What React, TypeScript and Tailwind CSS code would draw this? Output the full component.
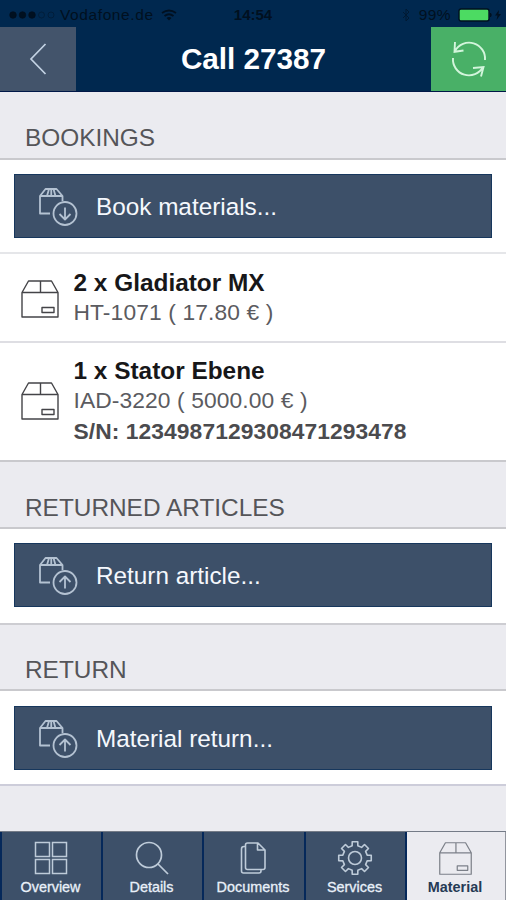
import type { ReactNode } from "react";

function BoxIcon({ className }: { className: string }) {
  return (
    <svg viewBox="0 0 40 40" className={className} fill="none" stroke="currentColor" strokeWidth="1.4" strokeLinejoin="round">
      <path d="M2 13.500 8.500 2H31.500L38 13.500V38H2Z M2 13.500H38 M20.500 2V13.500 M22 28.500H34V33.500H22Z" />
    </svg>
  );
}

function TransferIcon({ up }: { up?: boolean }) {
  return (
    <svg viewBox="0 0 40 40" className="h-10 w-10 text-[#b4c2d2]" fill="none" stroke="currentColor" strokeWidth="1.8" strokeLinejoin="round">
      <path d="M12 27.500H2V10L7.500 3H18.500L24.500 10V15 M2 10H24.500 M11 3 9 10 M15.500 3 17.500 10 M13.250 3V9" />
      <circle cx="27" cy="27.500" r="11.500" />
      {up ? <path d="M27 33.500V22 M21.500 27 27 21.500 32.500 27" /> : <path d="M27 21.500V33 M21.500 28 27 33.500 32.500 28" />}
    </svg>
  );
}

function ActionRow({ label, up, className }: { label: string; up?: boolean; className: string }) {
  return (
    <div className={`bg-white px-[14px] ${className}`}>
      <button className="flex h-16 w-[478px] items-center border border-[#17375d] bg-[#3d5069] pl-[23px] text-left text-[24.3px] whitespace-nowrap text-[#f5f8fd]">
        <TransferIcon up={up} />
        <span className="ml-[18px] pt-[2px]">{label}</span>
      </button>
    </div>
  );
}

function SectionTitle({ children, className }: { children: ReactNode; className: string }) {
  return (
    <h2 className={`flex items-end border-b-2 border-[#c9c9cd] bg-[#ebebf0] pl-[25px] text-[24.4px] leading-[28px] text-[#555559] ${className}`}>
      {children}
    </h2>
  );
}

function Tab({ label, active, children }: { label: string; active?: boolean; children: ReactNode }) {
  return (
    <div
      className={`flex flex-col items-center border-l-2 border-[#05285a] pt-[7px] pr-[2px] text-[14.4px] leading-[18px] ${
        active ? "border-r border-r-[#92959e] bg-[#ebebf0] font-bold text-[#263a55]" : "bg-[#3d5069] text-[#e9f0f9]"
      }`}
    >
      <div className="flex h-[39px] items-center justify-center pb-px">{children}</div>
      <span className={active ? "" : "[-webkit-text-stroke:0.3px_currentColor]"}>{label}</span>
    </div>
  );
}

const gearPath = Array.from({ length: 8 }, (_, i) => {
  const base = (i * Math.PI) / 4;
  return [[-0.23, 12.5], [-0.17, 16.5], [0.17, 16.5], [0.23, 12.5]]
    .map(([angle, radius], j) => {
      const x = 18 + Math.sin(base + angle) * radius;
      const y = 18 - Math.cos(base + angle) * radius;
      return `${i === 0 && j === 0 ? "M" : "L"}${x.toFixed(2)} ${y.toFixed(2)}`;
    })
    .join(" ");
}).join(" ") + "Z";

export default function App() {
  return (
    <div className="flex h-[900px] w-[506px] flex-col overflow-hidden bg-[#ebebf0] font-['Liberation_Sans',Arial,sans-serif]">
      <header className="flex h-[92px] flex-col border-b border-[#001747] bg-[#00284f]">
        <div className="grid h-[27px] grid-cols-[1fr_auto_1fr] items-center pt-[3px] text-[15.5px] text-[#001020]">
          <div className="flex items-center pl-[9px]">
            <svg viewBox="0 0 46 8" className="h-2 w-[46px]" stroke="currentColor" strokeWidth="0.7">
              <circle cx="4" cy="4" r="3.3" fill="currentColor" />
              <circle cx="13.500" cy="4" r="3.3" fill="currentColor" />
              <circle cx="23" cy="4" r="3.3" fill="currentColor" />
              <circle cx="32.500" cy="4" r="3" fill="none" opacity=".6" />
              <circle cx="42" cy="4" r="3" fill="none" opacity=".6" />
            </svg>
            <span className="ml-[5px] tracking-[0.6px]">Vodafone.de</span>
            <svg viewBox="0 0 16 12" className="ml-[7px] h-3 w-4" fill="none" stroke="currentColor" strokeWidth="1.8">
              <path d="M1 4Q8-1 15 4 M3.500 7Q8 3.500 12.500 7" />
              <path d="M5.500 9 8 11.500 10.500 9Q8 7 5.500 9Z" fill="currentColor" stroke="none" />
            </svg>
          </div>
          <span className="text-[15px] font-bold">14:54</span>
          <div className="flex items-center justify-end pr-[5px]">
            <svg viewBox="0 0 8 14" className="mr-[9px] h-[14px] w-2 opacity-60" fill="none" stroke="currentColor" strokeWidth="1">
              <path d="M1 4 7 10 4 13V1L7 4 1 10" />
            </svg>
            <span className="mr-[7px] tracking-[0.4px]">99%</span>
            <svg viewBox="0 0 44 14" className="-mr-px h-[14px] w-11">
              <rect x="1" y="1" width="30" height="12" rx="2" fill="#4cdb62" stroke="#001020" strokeWidth="1.4" />
              <path d="M32.500 5Q34 7 32.500 9Z" fill="#001020" stroke="#001020" />
              <path d="M41 2 37 7.500H39.500L38.500 12 43 6H40.500Z" fill="#001020" />
            </svg>
          </div>
        </div>
        <div className="grid h-[65px] grid-cols-[76px_1fr_75px]">
          <button className="flex items-center justify-center bg-[#43546b]">
            <svg viewBox="0 0 18 32" className="h-8 w-[18px]" fill="none" stroke="#c3d2e3" strokeWidth="1.7">
              <path d="M16.500 1 2 16 16.500 31" />
            </svg>
          </button>
          <h1 className="flex items-center justify-center pt-px text-[29.7px] font-bold whitespace-nowrap text-white">Call 27387</h1>
          <button className="flex items-center justify-center bg-[#49b067]">
            <svg viewBox="0 0 38 40" className="h-10 w-[38px]" fill="none" stroke="#d3f5dc" strokeWidth="1.9">
              <path d="M5 12A16 16 0 0 1 35 21 M33 28A16 16 0 0 1 3 19 M5 3 4.500 12.800 13.500 11.500 M23 29 33.500 28 31 37.500" />
            </svg>
          </button>
        </div>
      </header>

      <main className="flex-1">
        <SectionTitle className="h-[68px] pb-[6px]">BOOKINGS</SectionTitle>
        <ActionRow label="Book materials..." className="h-[94px] border-b-2 border-[#e5e6e9] pt-[14px]" />
        <article className="flex h-[89px] items-center border-b-2 border-[#dedee3] bg-white pl-5">
          <BoxIcon className="mt-[2px] h-10 w-10 text-[#444448]" />
          <div className="ml-[13.5px] whitespace-nowrap">
            <h3 className="text-[24.4px] leading-[30px] font-bold text-[#171719]">2 x Gladiator MX</h3>
            <p className="-mt-px mb-px text-[22.8px] leading-[30px] tracking-[0.12px] text-[#5b5b60]">HT-1071 ( 17.80 € )</p>
          </div>
        </article>
        <article className="flex h-[119px] items-center border-b-2 border-[#c9c9cd] bg-white pl-5">
          <BoxIcon className="-mt-[2px] h-10 w-10 text-[#444448]" />
          <div className="ml-[13.5px] whitespace-nowrap">
            <h3 className="text-[24.4px] leading-[30px] font-bold text-[#171719]">1 x Stator Ebene</h3>
            <p className="-mt-px text-[22.8px] leading-[30px] tracking-[0.1px] text-[#5b5b60]">IAD-3220 ( 5000.00 € )</p>
            <p className="mb-px text-[22.8px] leading-[32px] font-bold tracking-[0.08px] text-[#4b4b4e]">S/N: 1234987129308471293478</p>
          </div>
        </article>
        <SectionTitle className="h-[67px] pb-[5px]">RETURNED ARTICLES</SectionTitle>
        <ActionRow label="Return article..." up className="h-[96px] border-b-2 border-[#cdcdd2] pt-[14px]" />
        <SectionTitle className="h-[66px] pb-[5px]">RETURN</SectionTitle>
        <ActionRow label="Material return..." up className="h-[95px] border-b-2 border-[#cdcdda] pt-[15px]" />
      </main>

      <nav className="grid h-[69px] grid-cols-[101px_101px_102px_101px_101px] border-t border-[#747b87]">
        <Tab label="Overview">
          <svg viewBox="0 0 34 34" className="h-[34px] w-[34px]" fill="none" stroke="#becbd9" strokeWidth="1.5">
            <path d="M1.500 1.500H15.500V15.500H1.500Z M18.500 1.500H32.500V15.500H18.500Z M1.500 18.500H15.500V32.500H1.500Z M18.500 18.500H32.500V32.500H18.500Z" />
          </svg>
        </Tab>
        <Tab label="Details">
          <svg viewBox="0 0 34 34" className="h-[34px] w-[34px]" fill="none" stroke="#becbd9" strokeWidth="1.7">
            <circle cx="14" cy="14" r="12.5" />
            <path d="M23 23 33 33" />
          </svg>
        </Tab>
        <Tab label="Documents">
          <svg viewBox="0 0 28 34" className="h-[34px] w-7" fill="none" stroke="#becbd9" strokeWidth="1.6" strokeLinejoin="round">
            <path d="M8.500 2H19L26 9V26.500Q26 28.500 24 28.500H8.500Q6.500 28.500 6.500 26.500V4Q6.500 2 8.500 2Z M18.500 2V9H26 M6.500 5.500H5Q2.500 5.500 2.500 8V30Q2.500 32 4.500 32H20Q22 32 22 30V28.500" />
          </svg>
        </Tab>
        <Tab label="Services">
          <svg viewBox="0 0 36 36" className="h-9 w-9" fill="none" stroke="#becbd9" strokeWidth="1.6" strokeLinejoin="round">
            <path d={gearPath} />
            <circle cx="18" cy="18" r="6.5" />
          </svg>
        </Tab>
        <Tab label="Material" active>
          <BoxIcon className="h-[35px] w-[35px] text-[#7c8089]" />
        </Tab>
      </nav>
    </div>
  );
}
